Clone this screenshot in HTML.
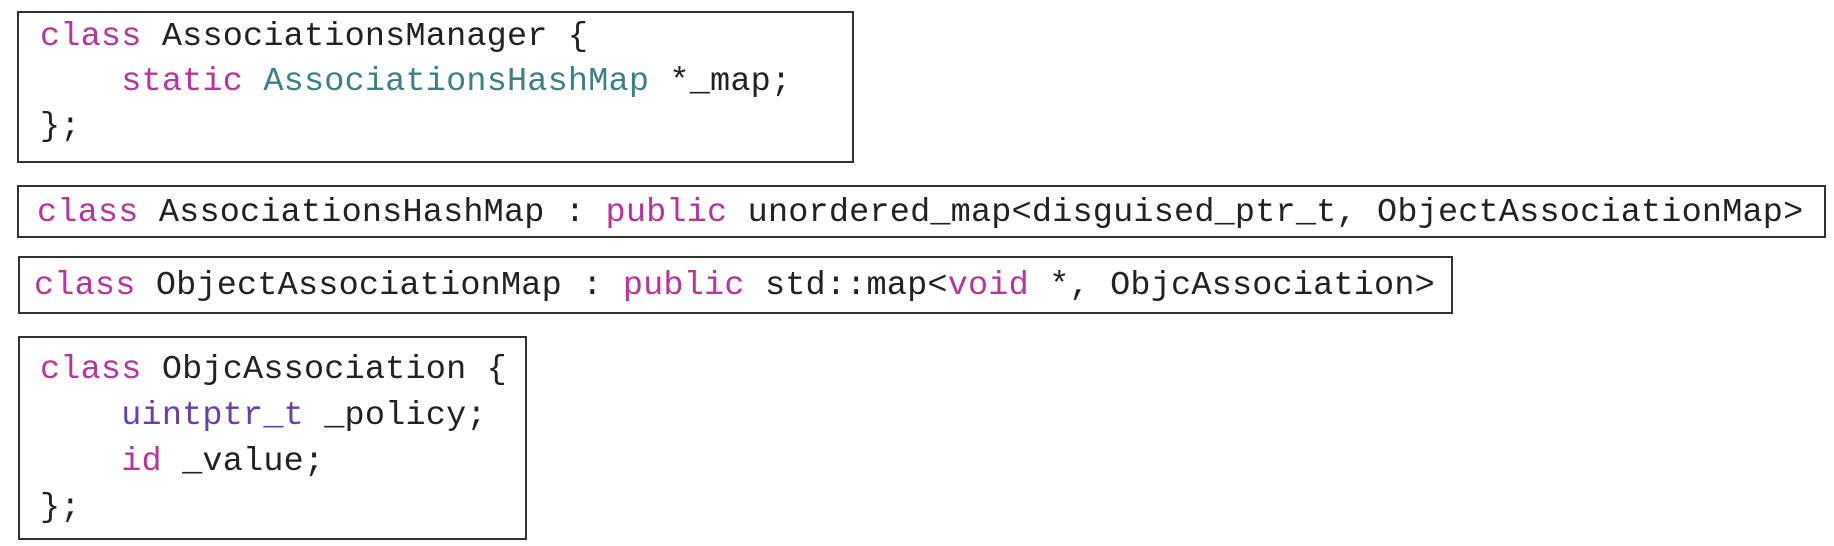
<!DOCTYPE html>
<html><head><style>
body{margin:0;width:1834px;height:546px;background:#fff;position:relative;overflow:hidden}
.b{position:absolute;border:2px solid #333;box-sizing:border-box}
.t{position:absolute;font-family:"Liberation Mono",monospace;font-size:33.5px;line-height:45px;color:#222;white-space:pre;letter-spacing:0.2px}
.k{color:#b8359a}.c{color:#3f8088}.p{color:#6b3fa8}
</style></head><body>
<div class="b" style="left:17px;top:11px;width:837px;height:152px"></div>
<div class="t" style="left:40px;top:15px"><span class="k">class</span> AssociationsManager {
    <span class="k">static</span> <span class="c">AssociationsHashMap</span> *_map;
};</div>
<div class="b" style="left:17px;top:185px;width:1809px;height:53px"></div>
<div class="t" style="left:37px;top:191px"><span class="k">class</span> AssociationsHashMap : <span class="k">public</span> unordered_map&lt;disguised_ptr_t, ObjectAssociationMap&gt;</div>
<div class="b" style="left:18px;top:256px;width:1435px;height:58px"></div>
<div class="t" style="left:34px;top:264px"><span class="k">class</span> ObjectAssociationMap : <span class="k">public</span> std::map&lt;<span class="k">void</span> *, ObjcAssociation&gt;</div>
<div class="b" style="left:18px;top:336px;width:509px;height:204px"></div>
<div class="t" style="left:40px;top:347px;line-height:46px"><span class="k">class</span> ObjcAssociation {
    <span class="p">uintptr_t</span> _policy;
    <span class="k">id</span> _value;
};</div>
</body></html>
